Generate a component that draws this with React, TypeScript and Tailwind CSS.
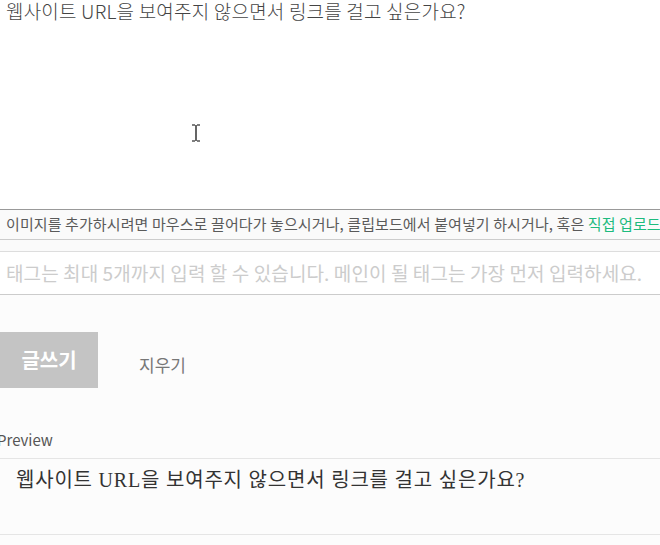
import React from 'react';

const kr = { fontFamily: '"Noto Sans CJK KR", "Noto Sans", sans-serif' };

const App: React.FC = () => {
  return (
    <div className="w-[660px] h-[545px] overflow-hidden bg-[#fcfcfc]" style={kr}>
      {/* editor */}
      <div className="relative h-[209px] bg-white px-[6px]">
        <p className="text-[19px] leading-[22px] text-[#444] tracking-[0.2px] font-light">
          웹사이트 URL을 보여주지 않으면서 링크를 걸고 싶은가요?
        </p>
        <svg className="absolute left-[191px] top-[124px]" width="10" height="18" viewBox="0 0 10 18">
          <path d="M1 1h3M6 1h3M5 1v16M1 17h3M6 17h3" stroke="#000" strokeWidth="1.2" fill="none" />
        </svg>
      </div>

      {/* drop hint */}
      <div className="h-[31px] border-t border-b border-t-[#999] border-b-[#ccc] bg-[#fafafa] px-[6px] flex items-center whitespace-nowrap overflow-hidden">
        <span className="text-[15px] text-[#5a5a5a] tracking-[0.1px]">
          이미지를 추가하시려면 마우스로 끌어다가 놓으시거나, 클립보드에서 붙여넣기 하시거나, 혹은{' '}
          <span className="text-[#1dbb7e]">직접 업로드하세요.</span>
        </span>
      </div>

      <div className="h-[11px] bg-[#fafafa]" />

      {/* tags */}
      <div className="h-[44px] border-t border-b border-t-[#ddd] border-b-[#ccc] bg-white px-[6px] flex items-center whitespace-nowrap overflow-hidden">
        <span className="text-[19px] text-[#ccc] tracking-[0.1px]">
          태그는 최대 5개까지 입력 할 수 있습니다. 메인이 될 태그는 가장 먼저 입력하세요.
        </span>
      </div>

      {/* actions */}
      <div className="mt-[37px] flex items-center">
        <button className="w-[98px] h-[56px] bg-[#c4c4c4] text-white text-[20px] font-bold">글쓰기</button>
        <button className="ml-[41px] mt-[10px] text-[17px] text-[#777]">지우기</button>
      </div>

      {/* preview */}
      <div className="mt-[42px] -ml-[3px] text-[15px] leading-[20px] text-[#555]">
        Preview
      </div>
      <div className="mt-[8px] h-[77px] border-t border-b border-[#e5e5e5] px-[16px] pt-[8px]">
        <p
          className="text-[20px] leading-[26px] text-[#333] tracking-[0.8px]"
          style={{ fontFamily: '"Liberation Serif", "Noto Sans CJK KR", serif' }}
        >
          웹사이트 URL을 보여주지 않으면서 링크를 걸고 싶은가요?
        </p>
      </div>
    </div>
  );
};

export default App;
